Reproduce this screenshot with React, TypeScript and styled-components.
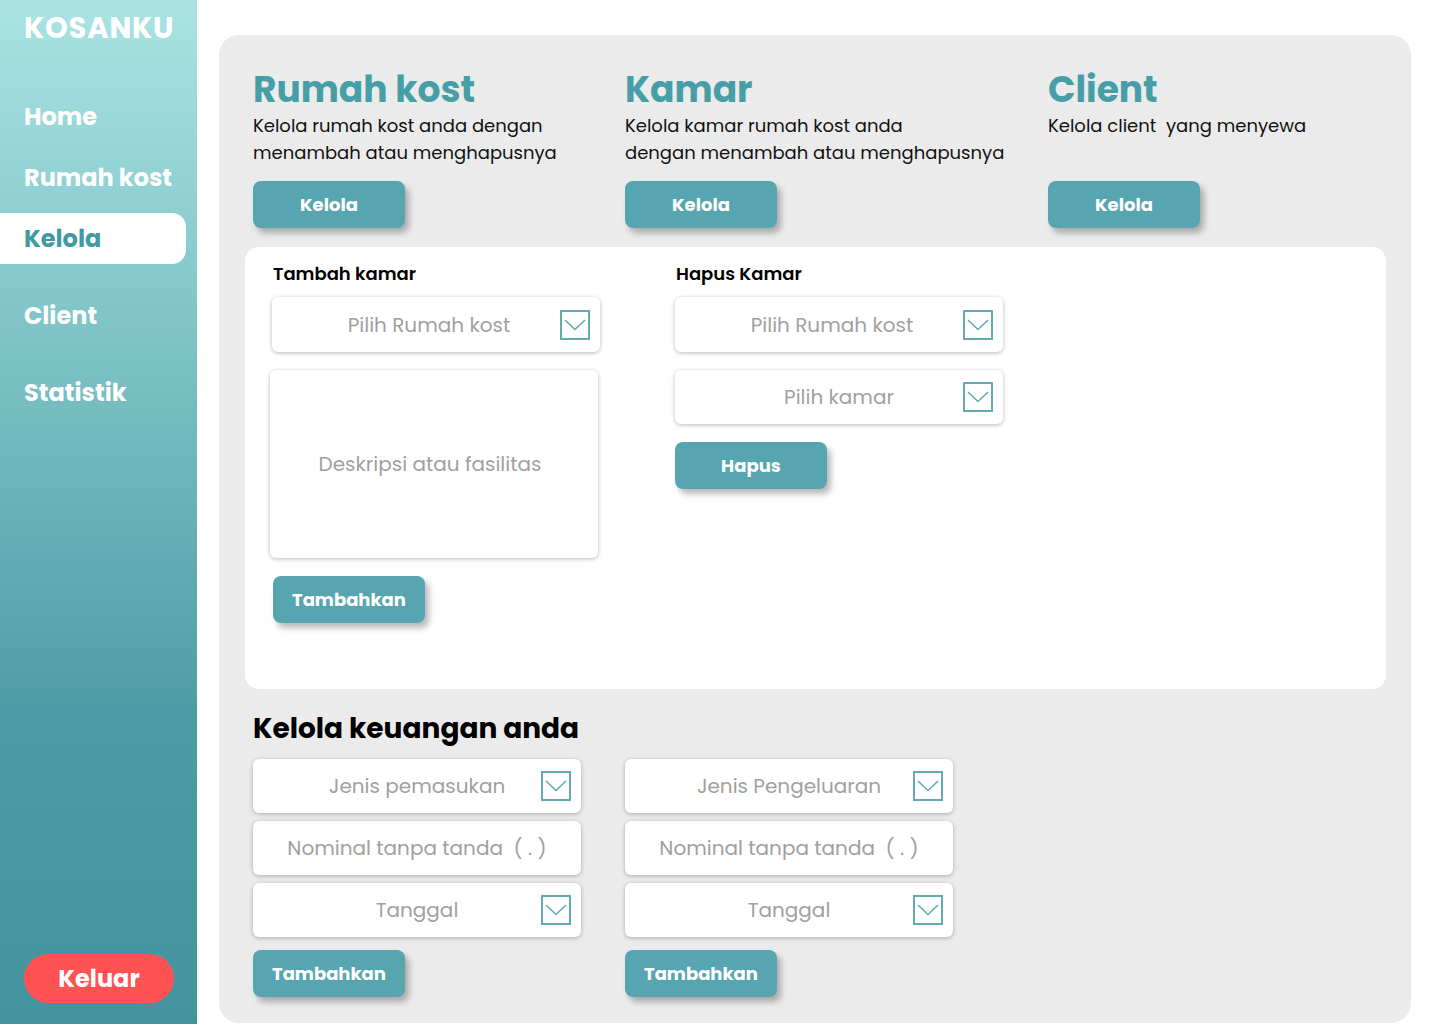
import React from "react";
import styled, { createGlobalStyle } from "styled-components";

const FONT = `"Poppins", "DejaVu Sans", "Open Sans", sans-serif`;

const Global = createGlobalStyle`
  html, body { margin: 0; padding: 0; background: #ffffff; }
  body { font-family: ${FONT}; }
  * { box-sizing: border-box; }
`;

const Page = styled.div`
  display: flex;
  width: 1440px;
  height: 1024px;
  overflow: hidden;
  background: #ffffff;
`;

const Sidebar = styled.aside`
  width: 197px;
  flex: none;
  height: 100%;
  background: linear-gradient(180deg, #aae3e3 0%, #7cc1c5 35%, #4c9ca5 70%, #43949e 100%);
  display: flex;
  flex-direction: column;
  padding: 8px 0 21px 0;
`;

const Logo = styled.div`
  font-family: ${FONT};
  font-weight: 700;
  font-size: 29px;
  color: #ffffff;
  padding-left: 24px;
  letter-spacing: 0.8px;
  line-height: 40px;
`;

const Nav = styled.nav`
  display: flex;
  flex-direction: column;
  margin-top: 43px;
  gap: 10px;
`;

const NavItem = styled.div<{ $active?: boolean; $gap?: number }>`
  width: 186px;
  height: 51px;
  display: flex;
  align-items: center;
  padding-left: 24px;
  font-family: ${FONT};
  font-weight: 700;
  font-size: 24px;
  color: ${(p) => (p.$active ? "#3f9aa3" : "#ffffff")};
  background: ${(p) => (p.$active ? "#ffffff" : "transparent")};
  border-radius: 0 14px 14px 0;
  margin-top: ${(p) => p.$gap ?? 0}px;
`;

const Spacer = styled.div`
  flex: 1;
`;

const Logout = styled.button`
  margin-left: 24px;
  width: 150px;
  height: 49px;
  border: none;
  border-radius: 25px;
  background: #ff5252;
  color: #ffffff;
  font-family: ${FONT};
  font-weight: 700;
  font-size: 24px;
  cursor: pointer;
`;

const Main = styled.main`
  flex: 1;
  padding: 35px 29px 0 22px;
`;

const Panel = styled.section`
  background: #ebebeb;
  border-radius: 20px;
  height: 988px;
  padding: 33px 25px 0 26px;
  display: flex;
  flex-direction: column;
`;

const Overview = styled.div`
  display: grid;
  grid-template-columns: 372px 423px 1fr;
  padding-left: 8px;
`;

const Feature = styled.div`
  display: flex;
  flex-direction: column;
`;

const FeatureTitle = styled.h2`
  margin: 0;
  font-family: ${FONT};
  font-weight: 700;
  font-size: 36px;
  line-height: 44px;
  color: #469ea6;
`;

const FeatureText = styled.p`
  margin: 0;
  height: 54px;
  font-family: ${FONT};
  font-weight: 400;
  font-size: 18px;
  line-height: 27px;
  color: #111111;
`;

const ActionButton = styled.button`
  width: 152px;
  height: 47px;
  border: none;
  border-radius: 8px;
  background: #56a5b0;
  color: #ffffff;
  font-family: ${FONT};
  font-weight: 700;
  font-size: 18px;
  box-shadow: 4px 5px 6px rgba(0, 0, 0, 0.28);
  cursor: pointer;
  flex: none;
`;

const FeatureButtonRow = styled.div`
  margin-top: 15px;
`;

const Card = styled.div`
  margin-top: 19px;
  background: #ffffff;
  border-radius: 14px;
  height: 442px;
  padding: 14px 0 0 27px;
  display: grid;
  grid-template-columns: 403px 330px;
  align-items: start;
`;

const FormColumn = styled.div`
  display: flex;
  flex-direction: column;
  gap: 18px;
`;

const FormLabel = styled.div`
  font-family: ${FONT};
  font-weight: 600;
  font-size: 18px;
  line-height: 24px;
  color: #000000;
  padding-left: 1px;
  margin-top: 1px;
  margin-bottom: -7px;
`;

const Field = styled.div<{ $height?: number; $offset?: number }>`
  position: relative;
  width: 328px;
  height: ${(p) => p.$height ?? 55}px;
  margin-left: ${(p) => p.$offset ?? 0}px;
  background: #ffffff;
  border-radius: 6px;
  box-shadow: 0 1px 4px rgba(0, 0, 0, 0.28);
  display: flex;
  align-items: center;
  justify-content: center;
`;

const Placeholder = styled.span<{ $shift?: number }>`
  font-family: ${FONT};
  font-weight: 400;
  font-size: 20px;
  color: #a0a0a0;
  transform: translateX(${(p) => p.$shift ?? 0}px);
  white-space: nowrap;
`;

const Chevron = styled.span`
  position: absolute;
  right: 10px;
  top: 50%;
  margin-top: -15px;
  width: 30px;
  height: 30px;
  border: 2px solid #62abb3;
  display: flex;
  align-items: center;
  justify-content: center;
`;

const ButtonSlot = styled.div<{ $top?: number; $left?: number }>`
  padding-left: ${(p) => p.$left ?? 0}px;
  margin-top: ${(p) => p.$top ?? 0}px;
`;

const Finance = styled.div`
  padding-left: 8px;
  margin-top: 22px;
  display: flex;
  flex-direction: column;
`;

const FinanceTitle = styled.h3`
  margin: 0;
  font-family: ${FONT};
  font-weight: 700;
  font-size: 28px;
  line-height: 36px;
  color: #000000;
`;

const FinanceGrid = styled.div`
  margin-top: 12px;
  display: grid;
  grid-template-columns: 372px 327px;
`;

const FinanceColumn = styled.div`
  display: flex;
  flex-direction: column;
  gap: 8px;
`;

const ChevronIcon = () => (
  <svg width="22" height="12" viewBox="0 0 22 12" fill="none">
    <path d="M1 1 L11 10.5 L21 1" stroke="#62abb3" strokeWidth="1.6" />
  </svg>
);

const Select = ({ text, shift, height }: { text: string; shift?: number; height?: number }) => (
  <Field $height={height}>
    <Placeholder $shift={shift}>{text}</Placeholder>
    <Chevron>
      <ChevronIcon />
    </Chevron>
  </Field>
);

const FinanceForm = ({ kind }: { kind: string }) => (
  <FinanceColumn>
    <Select text={kind} height={54} />
    <Field $height={54}>
      <Placeholder>Nominal tanpa tanda&nbsp; ( . )</Placeholder>
    </Field>
    <Select text="Tanggal" height={54} />
    <ButtonSlot $top={5}>
      <ActionButton>Tambahkan</ActionButton>
    </ButtonSlot>
  </FinanceColumn>
);

export default function App() {
  return (
    <>
      <Global />
      <Page>
        <Sidebar>
          <Logo>KOSANKU</Logo>
          <Nav>
            <NavItem>Home</NavItem>
            <NavItem>Rumah kost</NavItem>
            <NavItem $active>Kelola</NavItem>
            <NavItem $gap={16}>Client</NavItem>
            <NavItem $gap={16}>Statistik</NavItem>
          </Nav>
          <Spacer />
          <Logout>Keluar</Logout>
        </Sidebar>
        <Main>
          <Panel>
            <Overview>
              <Feature>
                <FeatureTitle>Rumah kost</FeatureTitle>
                <FeatureText>
                  Kelola rumah kost anda dengan
                  <br />
                  menambah atau menghapusnya
                </FeatureText>
                <FeatureButtonRow>
                  <ActionButton>Kelola</ActionButton>
                </FeatureButtonRow>
              </Feature>
              <Feature>
                <FeatureTitle>Kamar</FeatureTitle>
                <FeatureText>
                  Kelola kamar rumah kost anda
                  <br />
                  dengan menambah atau menghapusnya
                </FeatureText>
                <FeatureButtonRow>
                  <ActionButton>Kelola</ActionButton>
                </FeatureButtonRow>
              </Feature>
              <Feature>
                <FeatureTitle>Client</FeatureTitle>
                <FeatureText>Kelola client&nbsp; yang menyewa</FeatureText>
                <FeatureButtonRow>
                  <ActionButton>Kelola</ActionButton>
                </FeatureButtonRow>
              </Feature>
            </Overview>

            <Card>
              <FormColumn>
                <FormLabel>Tambah kamar</FormLabel>
                <Select text="Pilih Rumah kost" shift={-7} />
                <Field $height={188} $offset={-2}>
                  <Placeholder $shift={-4}>Deskripsi atau fasilitas</Placeholder>
                </Field>
                <ButtonSlot $left={1}>
                  <ActionButton>Tambahkan</ActionButton>
                </ButtonSlot>
              </FormColumn>
              <FormColumn>
                <FormLabel>Hapus Kamar</FormLabel>
                <Select text="Pilih Rumah kost" shift={-7} />
                <Select text="Pilih kamar" height={54} />
                <ButtonSlot>
                  <ActionButton>Hapus</ActionButton>
                </ButtonSlot>
              </FormColumn>
            </Card>

            <Finance>
              <FinanceTitle>Kelola keuangan anda</FinanceTitle>
              <FinanceGrid>
                <FinanceForm kind="Jenis pemasukan" />
                <FinanceForm kind="Jenis Pengeluaran" />
              </FinanceGrid>
            </Finance>
          </Panel>
        </Main>
      </Page>
    </>
  );
}
